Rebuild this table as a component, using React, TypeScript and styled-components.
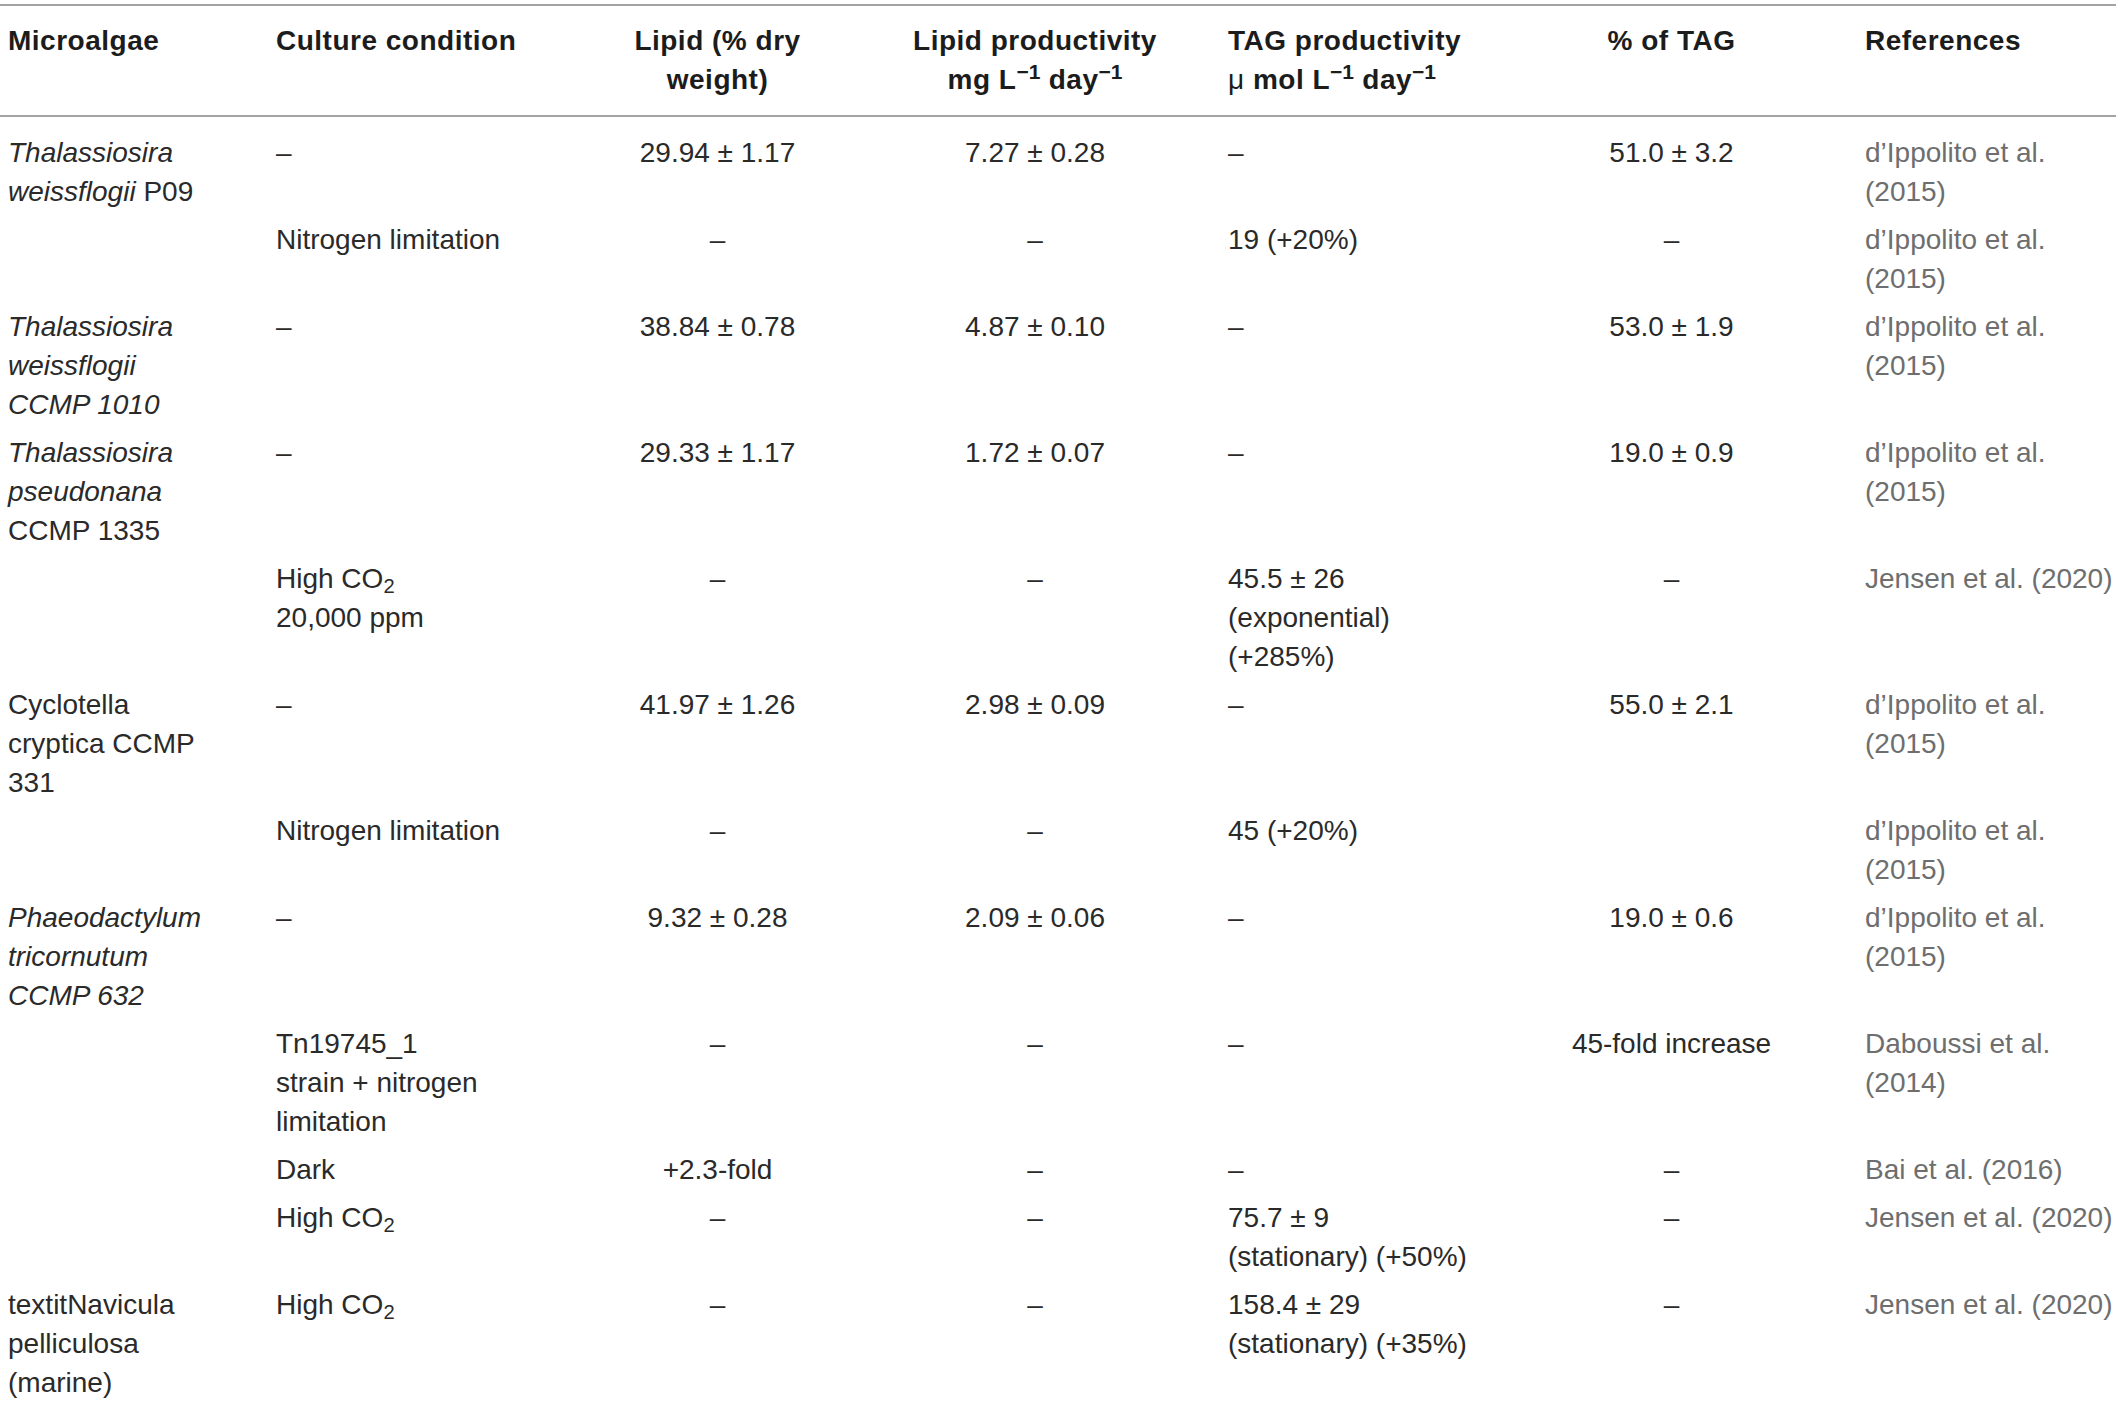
import React from "react";
import styled, { createGlobalStyle } from "styled-components";

const GlobalStyle = createGlobalStyle`
  html, body {
    margin: 0;
    padding: 0;
    background: #ffffff;
  }
  body {
    font-family: "Liberation Sans", Arial, sans-serif;
    color: #2a2a2a;
  }
`;

const Page = styled.div`
  padding-top: 4px;
  width: 2116px;
`;

const Table = styled.table`
  width: 2116px;
  border-collapse: collapse;
  table-layout: fixed;
  font-family: "Liberation Sans", Arial, sans-serif;
  font-size: 28px;
  line-height: 39px;
`;

const Head = styled.thead`
  border-top: 2px solid #a3a3a3;
  border-bottom: 2px solid #a3a3a3;
`;

const Body = styled.tbody`
  tr:first-child > td {
    padding-top: 16px;
  }
`;

type Align = "left" | "center";

const HeadCell = styled.th<{ $align?: Align; $padRight?: number }>`
  text-align: ${(p) => p.$align ?? "left"};
  vertical-align: top;
  font-weight: 700;
  color: #1c1c1c;
  letter-spacing: 0.5px;
  padding: 15px ${(p) => p.$padRight ?? 8}px 16px 8px;
`;

const Cell = styled.td<{ $align?: Align; $padRight?: number; $muted?: boolean }>`
  text-align: ${(p) => p.$align ?? "left"};
  vertical-align: top;
  font-weight: 400;
  color: ${(p) => (p.$muted ? "#6e6e6e" : "#2a2a2a")};
  padding: 5px ${(p) => p.$padRight ?? 8}px 4px 8px;
`;

const Sup = styled.sup`
  font-size: 0.75em;
  line-height: 0;
  vertical-align: 0.5em;
  letter-spacing: 0;
`;

const Sub = styled.sub`
  font-size: 0.72em;
  line-height: 0;
  vertical-align: -0.25em;
`;

const Mu = styled.span`
  font-weight: 400;
`;

const Sp = styled.i`
  font-style: italic;
`;

const widths = [268, 317, 265, 370, 266, 371, 259];

type Row = {
  algae?: React.ReactNode;
  cond?: React.ReactNode;
  lipid: React.ReactNode;
  lprod: React.ReactNode;
  tag: React.ReactNode;
  ptag: React.ReactNode;
  ref: React.ReactNode;
};

const DASH = "–";
const CO2 = (
  <>
    High CO<Sub>2</Sub>
  </>
);

const rows: Row[] = [
  {
    algae: (
      <>
        <Sp>Thalassiosira</Sp> <Sp>weissflogii</Sp> P09
      </>
    ),
    cond: DASH,
    lipid: "29.94 ± 1.17",
    lprod: "7.27 ± 0.28",
    tag: DASH,
    ptag: "51.0 ± 3.2",
    ref: "d’Ippolito et al. (2015)",
  },
  {
    cond: "Nitrogen limitation",
    lipid: DASH,
    lprod: DASH,
    tag: "19 (+20%)",
    ptag: DASH,
    ref: "d’Ippolito et al. (2015)",
  },
  {
    algae: <Sp>Thalassiosira weissflogii CCMP 1010</Sp>,
    cond: DASH,
    lipid: "38.84 ± 0.78",
    lprod: "4.87 ± 0.10",
    tag: DASH,
    ptag: "53.0 ± 1.9",
    ref: "d’Ippolito et al. (2015)",
  },
  {
    algae: (
      <>
        <Sp>Thalassiosira</Sp> <Sp>pseudonana</Sp> CCMP 1335
      </>
    ),
    cond: DASH,
    lipid: "29.33 ± 1.17",
    lprod: "1.72 ± 0.07",
    tag: DASH,
    ptag: "19.0 ± 0.9",
    ref: "d’Ippolito et al. (2015)",
  },
  {
    cond: (
      <>
        {CO2}
        <br />
        20,000 ppm
      </>
    ),
    lipid: DASH,
    lprod: DASH,
    tag: "45.5 ± 26 (exponential) (+285%)",
    ptag: DASH,
    ref: "Jensen et al. (2020)",
  },
  {
    algae: "Cyclotella cryptica CCMP 331",
    cond: DASH,
    lipid: "41.97 ± 1.26",
    lprod: "2.98 ± 0.09",
    tag: DASH,
    ptag: "55.0 ± 2.1",
    ref: "d’Ippolito et al. (2015)",
  },
  {
    cond: "Nitrogen limitation",
    lipid: DASH,
    lprod: DASH,
    tag: "45 (+20%)",
    ptag: "",
    ref: "d’Ippolito et al. (2015)",
  },
  {
    algae: <Sp>Phaeodactylum tricornutum CCMP 632</Sp>,
    cond: DASH,
    lipid: "9.32 ± 0.28",
    lprod: "2.09 ± 0.06",
    tag: DASH,
    ptag: "19.0 ± 0.6",
    ref: "d’Ippolito et al. (2015)",
  },
  {
    cond: (
      <>
        Tn19745_1
        <br />
        strain + nitrogen limitation
      </>
    ),
    lipid: DASH,
    lprod: DASH,
    tag: DASH,
    ptag: "45-fold increase",
    ref: "Daboussi et al. (2014)",
  },
  {
    cond: "Dark",
    lipid: "+2.3-fold",
    lprod: DASH,
    tag: DASH,
    ptag: DASH,
    ref: "Bai et al. (2016)",
  },
  {
    cond: CO2,
    lipid: DASH,
    lprod: DASH,
    tag: "75.7 ± 9 (stationary) (+50%)",
    ptag: DASH,
    ref: "Jensen et al. (2020)",
  },
  {
    algae: "textitNavicula pelliculosa (marine)",
    cond: CO2,
    lipid: DASH,
    lprod: DASH,
    tag: "158.4 ± 29 (stationary) (+35%)",
    ptag: DASH,
    ref: "Jensen et al. (2020)",
  },
];

export default function App() {
  return (
    <>
      <GlobalStyle />
      <Page>
        <Table>
          <colgroup>
            {widths.map((w, i) => (
              <col key={i} style={{ width: w }} />
            ))}
          </colgroup>
          <Head>
            <tr>
              <HeadCell $padRight={40}>Microalgae</HeadCell>
              <HeadCell $padRight={16}>Culture condition</HeadCell>
              <HeadCell $align="center">Lipid (% dry weight)</HeadCell>
              <HeadCell $align="center">
                Lipid productivity
                <br />
                mg L<Sup>−1</Sup> day<Sup>−1</Sup>
              </HeadCell>
              <HeadCell $padRight={14}>
                TAG productivity
                <br />
                <Mu>μ</Mu> mol L<Sup>−1</Sup> day<Sup>−1</Sup>
              </HeadCell>
              <HeadCell $align="center">% of TAG</HeadCell>
              <HeadCell $padRight={0}>References</HeadCell>
            </tr>
          </Head>
          <Body>
            {rows.map((r, i) => (
              <tr key={i}>
                <Cell $padRight={55}>{r.algae}</Cell>
                <Cell $padRight={16}>{r.cond}</Cell>
                <Cell $align="center">{r.lipid}</Cell>
                <Cell $align="center">{r.lprod}</Cell>
                <Cell $padRight={14}>{r.tag}</Cell>
                <Cell $align="center">{r.ptag}</Cell>
                <Cell $padRight={0} $muted>
                  {r.ref}
                </Cell>
              </tr>
            ))}
          </Body>
        </Table>
      </Page>
    </>
  );
}
